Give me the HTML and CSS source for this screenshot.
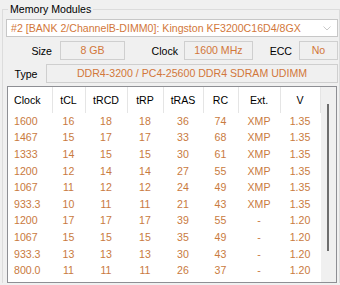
FILE: index.html
```html
<!DOCTYPE html>
<html lang="en">
<head>
  <meta charset="UTF-8">
  <title>Memory Modules</title>
  <link rel="stylesheet" href="styles.css">
</head>
<body>

<fieldset class="modules">
  <legend>Memory Modules</legend>

  <div class="select">
    <span>#2 [BANK 2/ChannelB-DIMM0]: Kingston KF3200C16D4/8GX</span>
    <svg class="arrow" width="8" height="5" viewBox="0 0 8 5"><path d="M0.5 0.5 L4 4 L7.5 0.5" fill="none" stroke="#c9c9c9" stroke-width="1"/></svg>
  </div>

  <div class="info-row">
    <span class="label size-label">Size</span>
    <span class="value size-value">8 GB</span>
    <span class="label clock-label">Clock</span>
    <span class="value clock-value">1600 MHz</span>
    <span class="label ecc-label">ECC</span>
    <span class="value ecc-value">No</span>
  </div>

  <div class="info-row">
    <span class="label type-label">Type</span>
    <span class="value type-value">DDR4-3200 / PC4-25600 DDR4 SDRAM UDIMM</span>
  </div>

  <div class="timings">
    <table>
      <thead>
        <tr>
          <th class="c-clock">Clock</th>
          <th class="c-cl">tCL</th>
          <th class="c-rcd">tRCD</th>
          <th class="c-rp">tRP</th>
          <th class="c-ras">tRAS</th>
          <th class="c-rc">RC</th>
          <th class="c-ext">Ext.</th>
          <th class="c-v">V</th>
        </tr>
      </thead>
      <tbody>
        <tr><td>1600</td><td>16</td><td>18</td><td>18</td><td>36</td><td>74</td><td>XMP</td><td>1.35</td></tr>
        <tr><td>1467</td><td>15</td><td>17</td><td>17</td><td>33</td><td>68</td><td>XMP</td><td>1.35</td></tr>
        <tr><td>1333</td><td>14</td><td>15</td><td>15</td><td>30</td><td>61</td><td>XMP</td><td>1.35</td></tr>
        <tr><td>1200</td><td>12</td><td>14</td><td>14</td><td>27</td><td>55</td><td>XMP</td><td>1.35</td></tr>
        <tr><td>1067</td><td>11</td><td>12</td><td>12</td><td>24</td><td>49</td><td>XMP</td><td>1.35</td></tr>
        <tr><td>933.3</td><td>10</td><td>11</td><td>11</td><td>21</td><td>43</td><td>XMP</td><td>1.35</td></tr>
        <tr><td>1200</td><td>17</td><td>17</td><td>17</td><td>39</td><td>55</td><td>-</td><td>1.20</td></tr>
        <tr><td>1067</td><td>15</td><td>15</td><td>15</td><td>35</td><td>49</td><td>-</td><td>1.20</td></tr>
        <tr><td>933.3</td><td>13</td><td>13</td><td>13</td><td>30</td><td>43</td><td>-</td><td>1.20</td></tr>
        <tr><td>800.0</td><td>11</td><td>11</td><td>11</td><td>26</td><td>37</td><td>-</td><td>1.20</td></tr>
      </tbody>
    </table>
    <div class="scroll"><div class="thumb"></div></div>
  </div>
</fieldset>

</body>
</html>
```

FILE: styles.css
```css
html, body {
  margin: 0;
  padding: 0;
}
body {
  background-color: #f0f0f0;
  font-family: "Liberation Sans", Arial, sans-serif;
  font-size: 10.6px;
  color: #000;
  width: 340px;
  height: 285px;
  overflow: hidden;
}
.modules {
  margin: 3px 0 0 2px;
  padding: 3px 0 0 3px;
  width: 338px;
  border: 1px solid #dcdcdc;
  border-bottom: none;
  box-sizing: border-box;
  min-width: 0;
}
.modules legend {
  margin-left: 2px;
  padding: 0 2px;
  line-height: 13px;
}
.select {
  width: 332px;
  height: 18px;
  box-sizing: border-box;
  border: 1px solid #c7c7c7;
  background-color: #fff;
  color: #d2773a;
  display: flex;
  align-items: center;
  justify-content: space-between;
  padding: 0 6px 0 4px;
}
.arrow {
  display: block;
}
.info-row {
  display: flex;
  align-items: center;
  height: 19px;
  margin-top: 4px;
}
.label {
  box-sizing: border-box;
  text-align: right;
}
.value {
  box-sizing: border-box;
  height: 19px;
  line-height: 17px;
  border: 1px solid #cfcfcf;
  text-align: center;
  color: #d2773a;
}
.size-label { width: 54px; padding-right: 8px; }
.size-value { width: 65px; }
.clock-label { width: 59px; padding-right: 6px; }
.clock-value { width: 69px; }
.ecc-label { width: 46px; padding-right: 7px; }
.ecc-value { width: 39px; }
.type-label { width: 40px; text-align: center; }
.type-value { width: 292px; }

.timings {
  display: flex;
  margin: 3px 0 0 1px;
  width: 330px;
  height: 197px;
  box-sizing: border-box;
  border: 1px solid #8e8f94;
  background-color: #fff;
}
table {
  border-collapse: collapse;
  table-layout: fixed;
  width: 312px;
  align-self: flex-start;
}
th {
  font-weight: normal;
  height: 26px;
  padding: 0;
  text-align: center;
  border-right: 1px solid #e5e5e5;
  box-sizing: border-box;
}
th.c-clock {
  text-align: left;
  padding-left: 6px;
}
td {
  height: 16.6px;
  padding: 0;
  text-align: center;
  color: #c97a3e;
  line-height: 13px;
}
td:first-child {
  text-align: left;
  padding-left: 6px;
}
.c-clock { width: 44px; }
.c-cl { width: 33px; }
.c-rcd { width: 42px; }
.c-rp { width: 36px; }
.c-ras { width: 40px; }
.c-rc { width: 35px; }
.c-ext { width: 42px; }
.c-v { width: 40px; }

.scroll {
  width: 17px;
  background-color: #f0f0f0;
  display: flex;
  justify-content: center;
}
.thumb {
  width: 2px;
  height: 147px;
  margin-top: 17px;
  background-color: #6e6e6e;
}
```
